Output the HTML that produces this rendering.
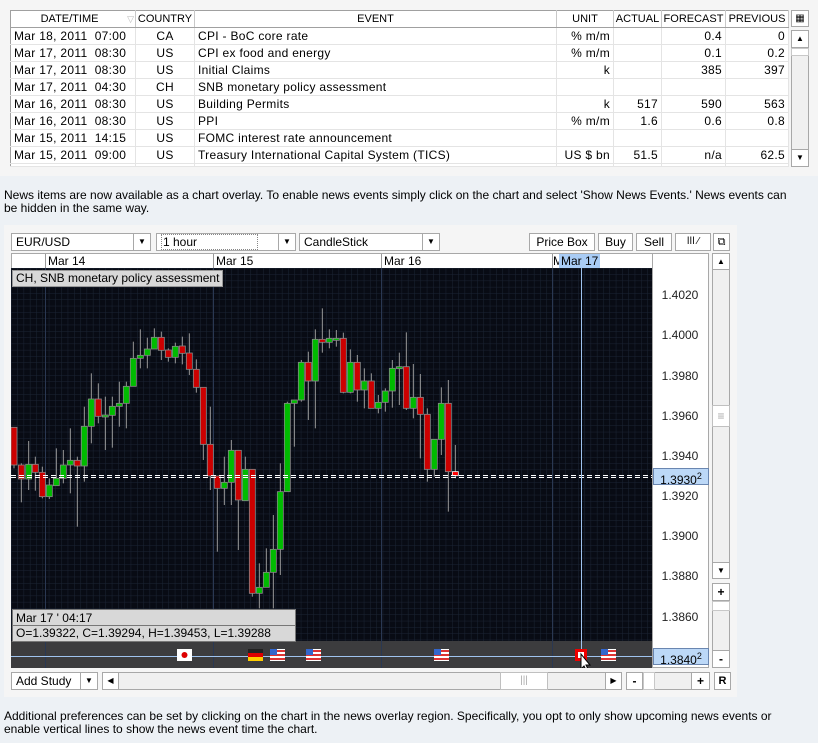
<!DOCTYPE html>
<html><head><meta charset="utf-8"><style>
*{margin:0;padding:0;box-sizing:border-box}
body{width:818px;height:743px;background:#edf1f5;font-family:"Liberation Sans",sans-serif;font-size:12px;color:#000;position:relative;overflow:hidden}
.abs{position:absolute}
.top{left:0;top:0;width:818px;height:176px;background:#f5f5f5}
table{position:absolute;left:10px;top:10px;width:778px;border-collapse:collapse;font-size:12px;letter-spacing:0.3px;background:#fff;border:1px solid #a0a0a0;table-layout:fixed}
td{height:17px;line-height:16px;border-right:1px solid #e4e4e4;border-bottom:1px solid #e4e4e4;padding:0 3px;white-space:nowrap;overflow:hidden}
tr.h td{background:#fff;text-align:center;border-right:1px solid #c8c8c8;border-bottom:1px solid #a0a0a0;height:17px;letter-spacing:0;font-size:11px;padding:0 1px}
tr.f td{height:3px;font-size:0;line-height:0}
.r{text-align:right}.c{text-align:center}
.p{font-size:12px;line-height:13px;left:4px}
.panel{left:4px;top:225px;width:733px;height:472px;background:#f5f5f5}
.box{background:#fff;border:1px solid #a8a8a8;height:18px;font-size:12px;line-height:16px;padding-left:4px}
.btn{background:#fff;border:1px solid #a8a8a8;height:18px;font-size:12px;line-height:16px;text-align:center}
.ax{font-size:12px;color:#222;right:0;width:56px;text-align:center}
</style></head><body>
<div class="abs top"></div>
<table>
<colgroup><col style="width:125px"><col style="width:59px"><col style="width:362px"><col style="width:57px"><col style="width:48px"><col style="width:64px"><col style="width:63px"></colgroup>
<tr class="h"><td>DATE/TIME <span style="color:#bbb;float:right;font-size:9px">▽</span></td><td>COUNTRY</td><td>EVENT</td><td>UNIT</td><td>ACTUAL</td><td>FORECAST</td><td>PREVIOUS</td></tr>
<tr><td>Mar 18, 2011&nbsp; 07:00</td><td class="c">CA</td><td>CPI - BoC core rate</td><td class="r">% m/m</td><td></td><td class="r">0.4</td><td class="r">0</td></tr>
<tr><td>Mar 17, 2011&nbsp; 08:30</td><td class="c">US</td><td>CPI ex food and energy</td><td class="r">% m/m</td><td></td><td class="r">0.1</td><td class="r">0.2</td></tr>
<tr><td>Mar 17, 2011&nbsp; 08:30</td><td class="c">US</td><td>Initial Claims</td><td class="r">k</td><td></td><td class="r">385</td><td class="r">397</td></tr>
<tr><td>Mar 17, 2011&nbsp; 04:30</td><td class="c">CH</td><td>SNB monetary policy assessment</td><td></td><td></td><td></td><td></td></tr>
<tr><td>Mar 16, 2011&nbsp; 08:30</td><td class="c">US</td><td>Building Permits</td><td class="r">k</td><td class="r">517</td><td class="r">590</td><td class="r">563</td></tr>
<tr><td>Mar 16, 2011&nbsp; 08:30</td><td class="c">US</td><td>PPI</td><td class="r">% m/m</td><td class="r">1.6</td><td class="r">0.6</td><td class="r">0.8</td></tr>
<tr><td>Mar 15, 2011&nbsp; 14:15</td><td class="c">US</td><td>FOMC interest rate announcement</td><td></td><td></td><td></td><td></td></tr>
<tr><td>Mar 15, 2011&nbsp; 09:00</td><td class="c">US</td><td>Treasury International Capital System (TICS)</td><td class="r">US $ bn</td><td class="r">51.5</td><td class="r">n/a</td><td class="r">62.5</td></tr>
<tr class="f"><td></td><td></td><td></td><td></td><td></td><td></td><td></td></tr>
</table>
<div class="abs" style="left:791px;top:10px;width:18px;height:17px;background:#fff;border:1px solid #a8a8a8;font-size:10px;text-align:center;line-height:15px">▦</div>
<div class="abs" style="left:791px;top:30px;width:18px;height:137px;background:#f0f0f0;border:1px solid #a8a8a8"></div>
<div class="abs" style="left:791px;top:30px;width:18px;height:18px;background:#fff;border:1px solid #a8a8a8;font-size:8px;text-align:center;line-height:16px">▲</div>
<div class="abs" style="left:791px;top:48px;width:18px;height:8px;background:#fff;border:1px solid #c8c8c8"></div>
<div class="abs" style="left:791px;top:149px;width:18px;height:18px;background:#fff;border:1px solid #a8a8a8;font-size:8px;text-align:center;line-height:16px">▼</div>

<div class="abs p" style="top:189px;width:798px">News items are now available as a chart overlay. To enable news events simply click on the chart and select 'Show News Events.' News events can be hidden in the same way.</div>

<div class="abs panel"></div>
<div class="abs box" style="left:11px;top:233px;width:140px">EUR/USD<span style="position:absolute;right:0;top:0;width:17px;border-left:1px solid #a8a8a8;height:16px;text-align:center;font-size:8px">▼</span></div>
<div class="abs box" style="left:156px;top:233px;width:140px"><span style="border:1px dotted #888;padding:0 60px 0 1px">1 hour</span><span style="position:absolute;right:0;top:0;width:17px;border-left:1px solid #a8a8a8;height:16px;text-align:center;font-size:8px">▼</span></div>
<div class="abs box" style="left:299px;top:233px;width:141px">CandleStick<span style="position:absolute;right:0;top:0;width:17px;border-left:1px solid #a8a8a8;height:16px;text-align:center;font-size:8px">▼</span></div>
<div class="abs btn" style="left:529px;top:233px;width:66px">Price Box</div>
<div class="abs btn" style="left:598px;top:233px;width:35px">Buy</div>
<div class="abs btn" style="left:636px;top:233px;width:36px">Sell</div>
<div class="abs btn" style="left:675px;top:233px;width:36px;font-size:10px">ǀǀǀ ⁄</div>
<div class="abs btn" style="left:713px;top:233px;width:17px;font-size:11px">⧉</div>

<div class="abs" style="left:11px;top:253px;width:642px;height:16px;background:#fff;border:1px solid #a8a8a8"></div>
<div class="abs" style="left:45px;top:254px;height:14px;border-left:1px solid #999;padding-left:2px;line-height:14px">Mar 14</div>
<div class="abs" style="left:381px;top:254px;height:14px;border-left:1px solid #999;padding-left:2px;line-height:14px">Mar 16</div>
<div class="abs" style="left:213px;top:254px;height:14px;border-left:1px solid #999;padding-left:2px;line-height:14px">Mar 15</div>
<div class="abs" style="left:552px;top:254px;height:14px;border-left:1px solid #999;line-height:14px;width:50px;overflow:hidden"><span style="display:inline-block;width:6px;overflow:hidden;vertical-align:top">M</span><span style="background:#a9ccf5;padding:0 2px;display:inline-block;height:14px">Mar 17</span></div>
<div class="abs" style="left:652px;top:253px;width:57px;height:16px;background:#fff;border:1px solid #a8a8a8"></div>

<svg class="abs" style="left:11px;top:268px" width="642" height="400" viewBox="11 268 642 400">
<defs><pattern id="g" x="11" y="268" width="6.3" height="6.3" patternUnits="userSpaceOnUse"><path d="M0 0V6.3M0 0H6.3" stroke="#1b2434" stroke-width="1"/></pattern></defs>
<rect x="11" y="268" width="642" height="373" fill="#080b14"/>
<rect x="11" y="268" width="642" height="373" fill="url(#g)"/>
<rect x="11" y="641" width="642" height="27" fill="#3c3c3e"/>
<g stroke="#2a3852" stroke-width="1"><line x1="45.5" y1="268" x2="45.5" y2="668"/><line x1="213.5" y1="268" x2="213.5" y2="668"/><line x1="381.5" y1="268" x2="381.5" y2="668"/><line x1="552.5" y1="268" x2="552.5" y2="668"/></g>
<g id="cs"></g>
<line x1="11" y1="475.5" x2="653" y2="475.5" stroke="#fff" stroke-dasharray="5,3"/>
<line x1="11" y1="477.5" x2="653" y2="477.5" stroke="#fff" stroke-dasharray="5,3"/>
<line x1="581.5" y1="268" x2="581.5" y2="668" stroke="#9fc3ee"/>
<line x1="11" y1="656.5" x2="653" y2="656.5" stroke="#9fc3ee"/>
<rect x="177" y="649" width="15" height="12" fill="#fff"/><circle cx="184.5" cy="655" r="3" fill="#d00"/>
<rect x="248" y="649" width="15" height="4" fill="#222"/><rect x="248" y="653" width="15" height="4" fill="#d00"/><rect x="248" y="657" width="15" height="4" fill="#fc0"/>
<g id="us"></g>
<rect x="575" y="649" width="12" height="12" fill="#e00"/><rect x="578" y="652" width="6" height="6" fill="#fff"/>
<path d="M581 654 l0 15 l3 -3 l3 6 l2 -1 l-3 -6 l4 0z" fill="#fff" stroke="#000"/>
</svg>
<div class="abs" style="left:12px;top:270px;background:#d8d8d8;border:1px solid #999;font-size:12px;padding:0 3px;line-height:15px">CH, SNB monetary policy assessment</div>
<div class="abs" style="left:12px;top:609px;width:284px;background:#d8d8d8;border:1px solid #777;font-size:12px;line-height:16px;padding-left:3px">Mar 17 ' 04:17</div>
<div class="abs" style="left:12px;top:625px;width:284px;background:#d8d8d8;border:1px solid #777;font-size:12px;line-height:15px;padding-left:3px">O=1.39322, C=1.39294, H=1.39453, L=1.39288</div>

<div class="abs" style="left:652px;top:268px;width:57px;height:400px;background:#fff;border:1px solid #a8a8a8;border-top:0">
<div class="abs ax" style="top:20px">1.4020</div>
<div class="abs ax" style="top:60px">1.4000</div>
<div class="abs ax" style="top:101px">1.3980</div>
<div class="abs ax" style="top:141px">1.3960</div>
<div class="abs ax" style="top:181px">1.3940</div>
<div class="abs ax" style="top:221px">1.3920</div>
<div class="abs ax" style="top:261px">1.3900</div>
<div class="abs ax" style="top:301px">1.3880</div>
<div class="abs ax" style="top:342px">1.3860</div>
<div class="abs" style="left:0;top:200px;width:56px;height:17px;background:#bcd8f7;border:1px solid #6a86b0;line-height:15px;text-align:center">1.3930<sup style="font-size:9px">2</sup></div>
<div class="abs" style="left:0;top:380px;width:56px;height:17px;background:#bcd8f7;border:1px solid #6a86b0;line-height:15px;text-align:center">1.3840<sup style="font-size:9px">2</sup></div>
</div>
<div class="abs" style="left:712px;top:253px;width:18px;height:326px;background:#f0f0f0;border:1px solid #a8a8a8"></div>
<div class="abs" style="left:712px;top:253px;width:18px;height:17px;background:#fff;border:1px solid #a8a8a8;font-size:8px;text-align:center;line-height:15px">▲</div>
<div class="abs" style="left:712px;top:405px;width:18px;height:22px;background:#fff;border:1px solid #c0c0c0;color:#aaa;text-align:center;line-height:20px">≡</div>
<div class="abs" style="left:712px;top:562px;width:18px;height:17px;background:#fff;border:1px solid #a8a8a8;font-size:8px;text-align:center;line-height:15px">▼</div>
<div class="abs" style="left:712px;top:583px;width:18px;height:85px;background:#f0f0f0;border:1px solid #a8a8a8"></div>
<div class="abs" style="left:712px;top:583px;width:18px;height:18px;background:#fff;border:1px solid #a8a8a8;font-weight:bold;text-align:center;line-height:16px">+</div>
<div class="abs" style="left:712px;top:601px;width:18px;height:10px;background:#fff;border:1px solid #c8c8c8"></div>
<div class="abs" style="left:712px;top:650px;width:18px;height:18px;background:#fff;border:1px solid #a8a8a8;font-weight:bold;text-align:center;line-height:16px">-</div>

<div class="abs box" style="left:11px;top:672px;width:87px">Add Study<span style="position:absolute;right:0;top:0;width:17px;border-left:1px solid #a8a8a8;height:16px;text-align:center;font-size:8px">▼</span></div>
<div class="abs" style="left:102px;top:672px;width:520px;height:18px;background:#f0f0f0;border:1px solid #a8a8a8"></div>
<div class="abs" style="left:102px;top:672px;width:17px;height:18px;background:#fff;border:1px solid #a8a8a8;font-size:8px;text-align:center;line-height:16px">◀</div>
<div class="abs" style="left:500px;top:672px;width:48px;height:18px;background:#fff;border:1px solid #c0c0c0;color:#aaa;text-align:center;line-height:16px;font-size:10px">|||</div>
<div class="abs" style="left:605px;top:672px;width:17px;height:18px;background:#fff;border:1px solid #a8a8a8;font-size:8px;text-align:center;line-height:16px">▶</div>
<div class="abs" style="left:626px;top:672px;width:84px;height:18px;background:#f0f0f0;border:1px solid #a8a8a8"></div>
<div class="abs" style="left:626px;top:672px;width:17px;height:18px;background:#fff;border:1px solid #a8a8a8;font-weight:bold;text-align:center;line-height:16px">-</div>
<div class="abs" style="left:643px;top:672px;width:12px;height:18px;background:#fff;border:1px solid #c8c8c8"></div>
<div class="abs" style="left:691px;top:672px;width:19px;height:18px;background:#fff;border:1px solid #a8a8a8;font-weight:bold;text-align:center;line-height:16px">+</div>
<div class="abs" style="left:714px;top:672px;width:17px;height:18px;background:#fff;border:1px solid #a8a8a8;font-weight:bold;text-align:center;line-height:16px;font-size:11px">R</div>

<div class="abs p" style="top:710px;width:790px">Additional preferences can be set by clicking on the chart in the news overlay region. Specifically, you opt to only show upcoming news events or enable vertical lines to show the news event time the chart.</div>

<script>
var d=[[42,382,495,382,505,'r'],[64,495,537,490,607,'r'],[86,493,537,423,570,'g'],[106,493,517,470,572,'r'],[127,517,590,500,595,'r'],[148,555,590,535,597,'g'],[169,535,557,445,557,'g'],[190,495,535,450,550,'g'],[211,481,495,385,580,'g'],[232,481,498,470,680,'r'],[253,379,498,320,545,'g'],[274,297,379,220,430,'g'],[295,297,349,250,370,'r'],[316,345,349,290,450,'g'],[337,319,346,290,443,'g'],[358,310,319,245,380,'g'],[379,259,310,245,385,'g'],[400,175,259,125,259,'g'],[421,166,175,88,205,'g'],[442,147,166,113,205,'g'],[463,112,147,85,147,'g'],[484,112,151,95,180,'r'],[505,150,172,145,185,'r'],[526,139,172,128,190,'g'],[547,138,160,110,193,'r'],[568,159,208,100,225,'r'],[589,208,262,178,278,'r'],[610,262,433,262,480,'r'],[631,433,528,320,570,'r'],[652,528,565,528,755,'r'],[673,547,565,470,615,'g'],[694,451,547,420,615,'g'],[715,451,600,451,750,'r'],[736,508,602,470,602,'g'],[757,508,880,508,890,'r'],[778,862,880,790,925,'g'],[799,817,862,745,862,'g'],[820,748,817,645,925,'g'],[841,575,748,490,825,'g'],[862,310,575,305,575,'g'],[883,300,310,300,440,'g'],[904,187,300,180,305,'g'],[925,187,243,155,360,'r'],[946,118,243,88,385,'g'],[967,118,127,25,158,'r'],[988,115,127,88,145,'g'],[1009,115,117,90,140,'g'],[1030,115,277,98,280,'r'],[1051,187,277,148,280,'g'],[1072,187,270,165,305,'r'],[1093,243,270,205,325,'g'],[1114,243,325,220,325,'r'],[1135,307,325,285,340,'g'],[1156,273,307,265,335,'g'],[1177,205,273,180,323,'g'],[1198,200,205,158,315,'g'],[1219,200,325,97,330,'r'],[1240,292,325,192,355,'g'],[1261,292,343,222,475,'r'],[1282,343,508,325,545,'r'],[1303,418,508,418,530,'g'],[1324,310,418,262,465,'g'],[1345,310,515,240,635,'r'],[1366,515,527,435,535,'x']];
var s='';
d.forEach(function(c){var x=c[0]/3,t=c[1]/3+300,b=c[2]/3+300,wt=c[3]/3+300,wb=c[4]/3+300;
s+='<line x1="'+x+'" y1="'+wt+'" x2="'+x+'" y2="'+wb+'" stroke="#999"/>';
var f=c[5]=='r'?'#c00':c[5]=='g'?'#0b0':'#f00';
s+='<rect x="'+(x-3)+'" y="'+t+'" width="6" height="'+Math.max(b-t,2)+'" fill="'+f+'" stroke="'+(c[5]=='x'?'#fff':'#888')+'" stroke-width="0.8"/>';});
document.getElementById('cs').innerHTML=s;
var u='';[270,306,434,601].forEach(function(x){u+='<rect x="'+x+'" y="649" width="15" height="12" fill="#fff"/><rect x="'+x+'" y="650" width="15" height="2" fill="#d33"/><rect x="'+x+'" y="654" width="15" height="2" fill="#d33"/><rect x="'+x+'" y="658" width="15" height="2" fill="#d33"/><rect x="'+x+'" y="649" width="7" height="6" fill="#36c"/>';});
document.getElementById('us').innerHTML=u;
</script>
</body></html>
